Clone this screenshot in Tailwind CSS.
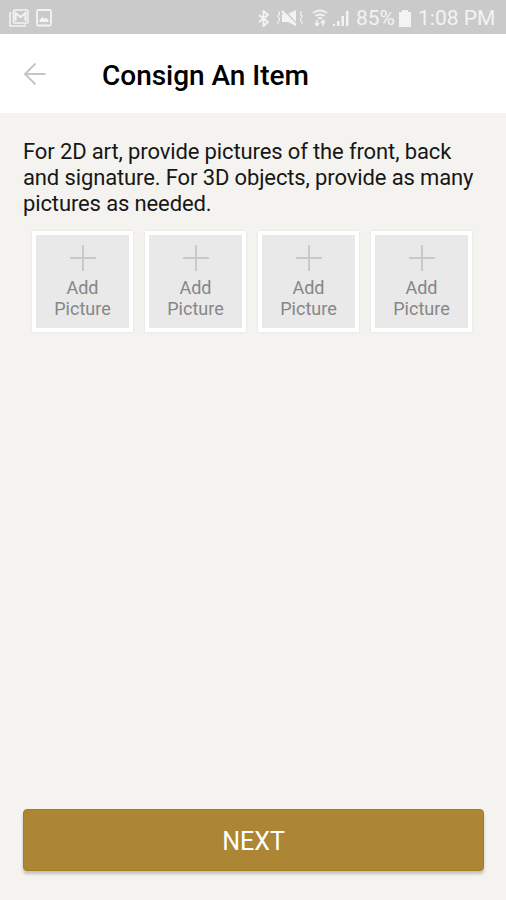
<!DOCTYPE html>
<html lang="en">
<head>
<meta charset="utf-8">
<title>Consign An Item</title>
<script src="https://cdn.jsdelivr.net/npm/@tailwindcss/browser@4"></script>
</head>
<body class="w-[506px] h-[900px] overflow-hidden bg-[#f4f3ef] font-['Roboto',sans-serif] flex flex-col">
<svg class="hidden"><symbol id="plus" viewBox="0 0 28 28"><path d="M14 1v26M1 14h26" stroke="#c9c9c9" stroke-width="2" fill="none"/></symbol></svg>
<div class="h-[34px] shrink-0 bg-[#cacaca] flex items-center justify-between pl-[9px] pr-[11px] text-[#f3f3f3]">
  <div class="flex items-center gap-[7px] pt-px">
    <svg class="w-5 h-[18px]" viewBox="0 0 20 18" fill="none" stroke="currentColor" stroke-width="1.5"><path d="M2.500 4H1v13h15v-1.500"/><rect x="4.500" y="1" width="14.500" height="13" rx="1"/><path d="M6.500 12V4l5 4 5-4v8" stroke-width="2"/></svg>
    <svg class="w-4 h-[18px]" viewBox="0 0 16 18"><rect x="1" y="1" width="14" height="15.500" rx="1.500" fill="none" stroke="currentColor" stroke-width="1.800"/><path d="M3.500 13V11l3-3 2 2 1.500-1.500 2.500 2.500v2z" fill="currentColor"/></svg>
  </div>
  <div class="flex items-center pt-[2px]">
    <svg class="w-3 h-[17px]" viewBox="0 0 12 17" fill="none" stroke="currentColor" stroke-width="1.900"><path d="M1 5l9 7-4.500 4V1L10 5l-9 7"/></svg>
    <svg class="w-[26px] h-[18px] ml-[7px]" viewBox="0 0 26 18"><path d="M5 5h6l8-4v16l-8-4H5z" fill="currentColor"/><path d="M7 1l13 14" stroke="#cacaca" stroke-width="1.500"/><path d="M5 2l14 14" stroke="currentColor" stroke-width="2"/><path d="M1 3h1.500v3H1v3h1.500v3H1v3M25 3h-1.500v3H25v3h-1.500v3H25v3" stroke="currentColor" fill="none"/></svg>
    <svg class="w-4 h-[18px] ml-[9px]" viewBox="0 0 16 18" fill="none" stroke="currentColor" stroke-width="1.900"><path d="M1 4q7-5 14 0M3.500 7q4.500-3 9 0M6 9.500q2-1 4 0"/><path d="M5 11v5M3 14l2 2.500L7 14M11 17v-5M9 14l2-2.500 2 2.500" stroke-width="1.500"/></svg>
    <svg class="w-[18px] h-[18px] ml-1" viewBox="0 0 18 18" fill="currentColor"><path d="M1 15h2v2H1zM5 12h2.500v5H5zM9.500 7H12v10H9.500zM14 2h2.500v15H14z"/></svg>
    <span class="ml-[6px] w-[39px] text-[21px] leading-[24px] whitespace-nowrap">85%</span>
    <svg class="w-3 h-[17px] ml-1" viewBox="0 0 12 17" fill="currentColor"><path d="M0 2h3V0h6v2h3v15H0z"/></svg>
    <span class="ml-[7px] w-[77px] text-[21px] leading-[24px] whitespace-nowrap">1:08 PM</span>
  </div>
</div>
<header class="h-[79px] shrink-0 bg-white flex items-center pl-[23px] pt-[3px]">
  <svg class="w-6 h-6 mb-[3px]" viewBox="0 0 24 24" fill="none" stroke="#c6c6c6" stroke-width="2"><path d="M22.500 12H2M12.500 1.500L2 12l10.500 10.500"/></svg>
  <h1 class="ml-[55px] pt-[2px] text-[28px] leading-8 font-medium text-black tracking-[-0.02px] whitespace-nowrap">Consign An Item</h1>
</header>
<main class="flex-1 flex flex-col px-[23px] pt-[26px] pb-[29px]">
  <p class="text-[22px] leading-[26px] tracking-[-0.125px] text-[#171717] whitespace-nowrap">For 2D art, provide pictures of the front, back<br>and signature. For 3D objects, provide as many<br>pictures as needed.</p>
  <div class="flex gap-3 mt-[14px] ml-[9px]">
    <button class="w-[101px] h-[101px] shrink-0 border-4 border-white bg-[#e9e9e9] shadow-[0_0_2px_#ddddd8] flex flex-col items-center pt-[9px] text-[18px] leading-[21px] text-[#868686]"><svg class="w-7 h-7 mb-[5px]"><use href="#plus"/></svg><span>Add<br>Picture</span></button>
    <button class="w-[101px] h-[101px] shrink-0 border-4 border-white bg-[#e9e9e9] shadow-[0_0_2px_#ddddd8] flex flex-col items-center pt-[9px] text-[18px] leading-[21px] text-[#868686]"><svg class="w-7 h-7 mb-[5px]"><use href="#plus"/></svg><span>Add<br>Picture</span></button>
    <button class="w-[101px] h-[101px] shrink-0 border-4 border-white bg-[#e9e9e9] shadow-[0_0_2px_#ddddd8] flex flex-col items-center pt-[9px] text-[18px] leading-[21px] text-[#868686]"><svg class="w-7 h-7 mb-[5px]"><use href="#plus"/></svg><span>Add<br>Picture</span></button>
    <button class="w-[101px] h-[101px] shrink-0 border-4 border-white bg-[#e9e9e9] shadow-[0_0_2px_#ddddd8] flex flex-col items-center pt-[9px] text-[18px] leading-[21px] text-[#868686]"><svg class="w-7 h-7 mb-[5px]"><use href="#plus"/></svg><span>Add<br>Picture</span></button>
  </div>
  <button class="mt-auto w-[461px] h-[62px] rounded border border-[#a57d20] bg-[#ac8634] shadow-[0_3px_3px_rgba(0,0,0,0.2)] text-white text-[25px] pt-[3px]">NEXT</button>
</main>
</body>
</html>
